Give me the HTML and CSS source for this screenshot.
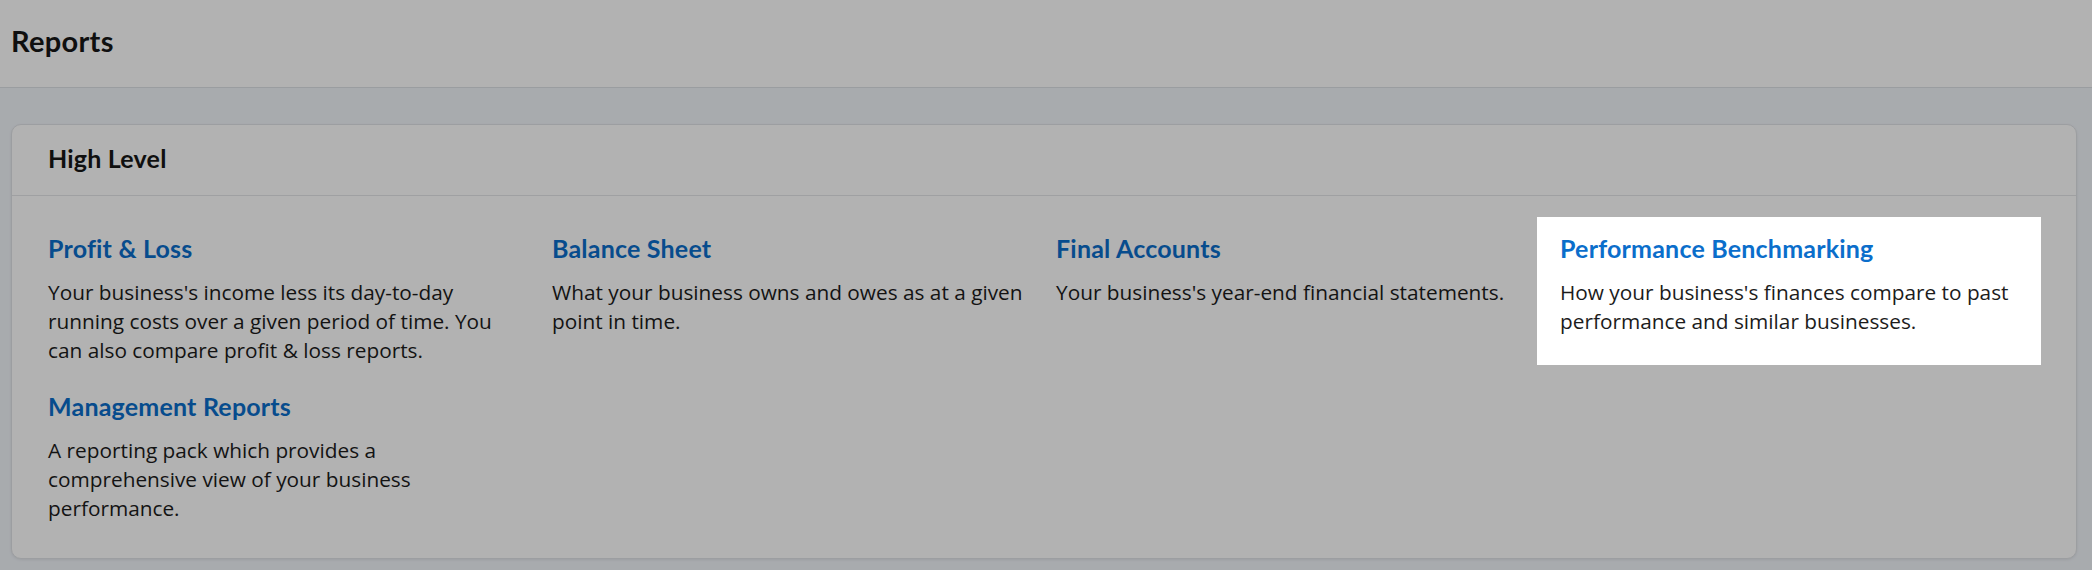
FILE: index.html
```html
<!DOCTYPE html>
<html lang="en">
<head>
<meta charset="utf-8">
<title>Reports</title>
<link rel="stylesheet" href="styles.css">
</head>
<body>
  <header class="page-header">
    <h1 class="page-title">Reports</h1>
  </header>
  <main class="page-main">
    <section class="card">
      <div class="card-header">
        <h2 class="card-title">High Level</h2>
      </div>
      <div class="card-body">
        <div class="report">
          <a class="report-title" href="#">Profit &amp; Loss</a>
          <p class="report-desc">Your business's income less its day-to-day running costs over a given period of time. You can also compare profit &amp; loss reports.</p>
        </div>
        <div class="report">
          <a class="report-title" href="#">Balance Sheet</a>
          <p class="report-desc">What your business owns and owes as at a given point in time.</p>
        </div>
        <div class="report">
          <a class="report-title" href="#">Final Accounts</a>
          <p class="report-desc">Your business's year-end financial statements.</p>
        </div>
        <div class="report report-spotlight">
          <a class="report-title" href="#">Performance Benchmarking</a>
          <p class="report-desc">How your business's finances compare to past performance and similar businesses.</p>
        </div>
        <div class="report">
          <a class="report-title" href="#">Management Reports</a>
          <p class="report-desc">A reporting pack which provides a comprehensive view of your business performance.</p>
        </div>
      </div>
    </section>
  </main>
  <div class="overlay"></div>
</body>
</html>
```
FILE: styles.css
```css
* { box-sizing: border-box; }

html, body {
  margin: 0;
  padding: 0;
}

body {
  background: #f1f5fa;
  font-family: Lato, "Noto Sans", sans-serif;
  color: #1e1e1e;
  width: 2092px;
  height: 570px;
  overflow: hidden;
}

.page-header {
  background: #ffffff;
  border-bottom: 1px solid #dde1e6;
  padding: 22px 11px 28px;
  height: 88px;
}

.page-title {
  margin: 0;
  font-size: 29px;
  line-height: 37px;
  font-weight: 700;
  letter-spacing: 0.3px;
  color: #161616;
}

.page-main {
  padding: 36px 15px 0 11px;
}

.card {
  background: #ffffff;
  border: 1px solid #e0e3e7;
  border-radius: 10px;
  box-shadow: 0 1px 3px rgba(0, 0, 0, 0.08);
}

.card-header {
  padding: 17px 36px 21px;
  border-bottom: 1px solid #e4e6e9;
}

.card-title {
  margin: 0;
  font-size: 25px;
  line-height: 32px;
  font-weight: 700;
  letter-spacing: 0.2px;
  color: #161616;
}

.card-body {
  display: grid;
  grid-template-columns: repeat(4, 504px);
  row-gap: 10px;
  padding: 21px 13px 35px;
}

.report {
  padding: 15px 5px 0 23px;
}

.report-spotlight {
  position: relative;
  z-index: 2;
  background: #ffffff;
}

.report-title {
  display: block;
  font-size: 25px;
  line-height: 32px;
  font-weight: 700;
  letter-spacing: 0.2px;
  color: #0b6ecb;
  text-decoration: none;
}

.report-desc {
  margin: 14px 0 0;
  font-family: "Open Sans", "Noto Sans", sans-serif;
  font-size: 20.8px;
  line-height: 29px;
  color: #1c1c1c;
}

.overlay {
  position: fixed;
  inset: 0;
  background: rgba(0, 0, 0, 0.3);
  z-index: 1;
}
```
